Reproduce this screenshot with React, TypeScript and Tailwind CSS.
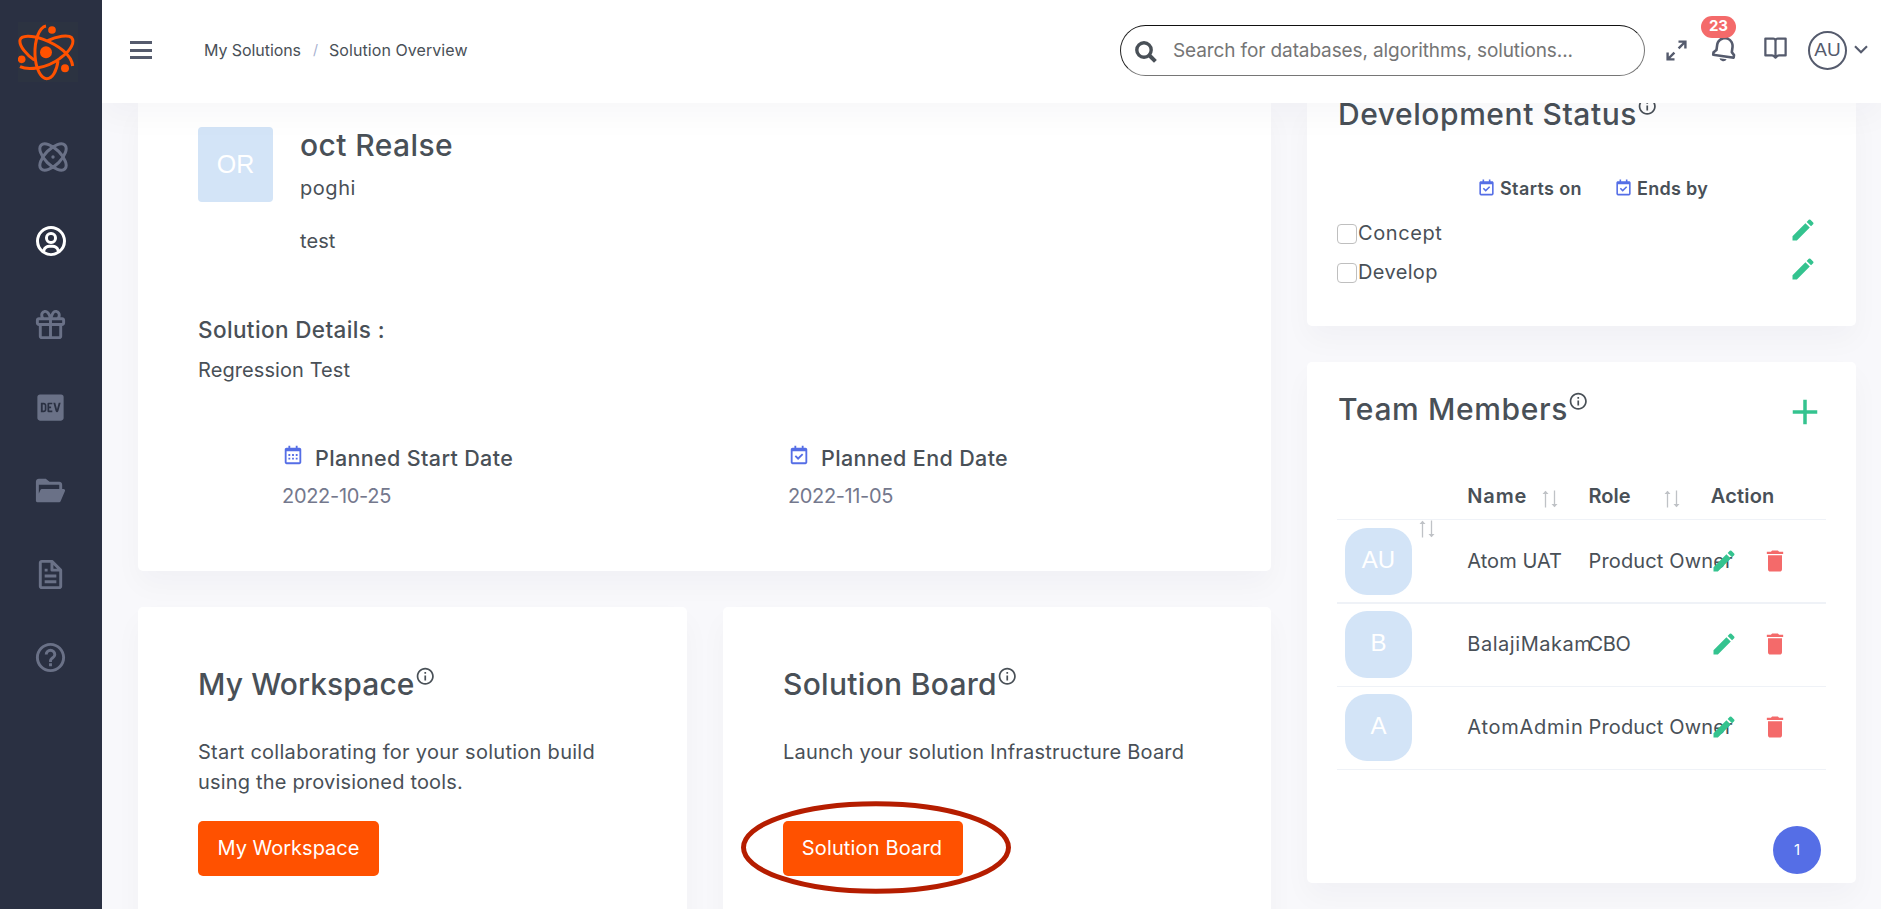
import type { ReactNode } from "react";
import { BiUserCircle, BiGift, BiLogoDevTo, BiSolidFolderOpen, BiFile, BiHelpCircle, BiBell, BiBookOpen, BiCalendar, BiCalendarCheck } from "react-icons/bi";
import { MdEdit, MdDelete, MdInfoOutline, MdAdd } from "react-icons/md";

function Logo() {
  return (
    <svg viewBox="54 66 180 180" className="size-[60px] bg-[#2c3341]" fill="none" stroke="#ff5100" strokeWidth="9">
      <path d="M138 78C118 82 103 120 105 165C107 210 125 236 140 236C158 236 170 212 174 183" />
      <path d="M103 180C80 165 57 138 60 120C63 105 95 105 130 118C175 135 215 165 218 198" />
      <path d="M60 200C85 212 140 205 180 175C215 150 225 125 215 113C205 103 170 108 143 122" />
      <g fill="#ff5100" stroke="none">
        <circle cx="138" cy="157" r="18" />
        <circle cx="156" cy="90" r="11.5" />
        <circle cx="65" cy="178" r="11.5" />
        <circle cx="195" cy="205" r="12" />
      </g>
    </svg>
  );
}

function AtomIcon() {
  return (
    <svg viewBox="0 0 30 30" className="-mt-px ml-1 size-[30px]" fill="none" stroke="currentColor" strokeWidth="3">
      <ellipse cx="15" cy="15" rx="16.8" ry="8" transform="rotate(45 15 15)" />
      <ellipse cx="15" cy="15" rx="16.8" ry="8" transform="rotate(-45 15 15)" />
      <circle cx="15" cy="15" r="1.7" fill="currentColor" stroke="none" />
    </svg>
  );
}

function ExpandIcon() {
  return (
    <svg viewBox="0 0 21 21" className="size-[21px]" fill="none" stroke="currentColor" strokeWidth="2.4">
      <path d="M12.5 1.6H19.4V8.5M19 2L12.6 8.4M1.6 12.5V19.4H8.5M2 19L8.4 12.6" />
    </svg>
  );
}

function SearchIcon() {
  return (
    <svg viewBox="0 0 22 22" className="mt-0.5 size-[22px]" fill="none" stroke="#495057">
      <circle cx="9" cy="9" r="7.2" strokeWidth="3.4" />
      <path d="M14 14L20.4 20.4" strokeWidth="4" />
    </svg>
  );
}

function ChevronIcon() {
  return (
    <svg viewBox="0 0 14 9" className="mr-[13px] mb-px ml-[7px] h-[9px] w-[14px]" fill="none" stroke="currentColor" strokeWidth="2.1">
      <path d="M1 1.3L7 7.3L13 1.3" />
    </svg>
  );
}

function SortArrows({ c = "" }: { c?: string }) {
  return (
    <svg viewBox="0 0 18 18" className={"h-[18px] w-[18px] " + c} fill="none" stroke="#bfc2c6" strokeWidth="1.3">
      <path d="M4.5 17.5V1.5M13.5 0.5V16.5" />
      <path d="M1.5 4L4.5 0.8L7.5 4ZM10.5 14L13.5 17.2L16.5 14Z" fill="#bfc2c6" stroke="none" />
    </svg>
  );
}

function Heading({ title, tracking }: { title: string; tracking: string }) {
  return (
    <h4 className={"flex h-9 text-[30px] leading-9 font-medium whitespace-nowrap " + tracking}>
      {title}
      <MdInfoOutline className="size-[20.5px] shrink-0" />
    </h4>
  );
}

function Stage({ label, tracking }: { label: string; tracking: string }) {
  return (
    <div className="flex h-[30px] items-center text-[20px]">
      <span className="mt-0.5 size-5 rounded-[4px] border border-[#bfbfbf] bg-white" />
      <span className={"ml-px " + tracking}>{label}</span>
      <MdEdit className="mr-[9px] -mt-[7px] ml-auto size-[28px] text-[#34c38f]" />
    </div>
  );
}

const card = "bg-white shadow-[0_14px_29px_rgba(18,38,63,0.03)]";

const navIcons: ReactNode[] = [
  <AtomIcon />,
  <BiUserCircle className="size-9 text-white" />,
  <BiGift />,
  <BiLogoDevTo />,
  <BiSolidFolderOpen />,
  <BiFile />,
  <BiHelpCircle />,
];

const members = [
  { initials: "AU", name: "Atom UAT", nameCls: "tracking-[0.05px]", role: "Product Owner", roleCls: "tracking-[0.15px]", row: "h-[84px] border-b-2 pt-2" },
  { initials: "B", name: "BalajiMakam", nameCls: "tracking-[0.55px]", role: "CBO", roleCls: "tracking-[-0.3px]", row: "h-[83px] border-b pt-[7px]" },
  { initials: "A", name: "AtomAdmin", nameCls: "tracking-[0.75px]", role: "Product Owner", roleCls: "tracking-[0.15px]", row: "h-[83px] border-b pt-[7px]" },
];

const dates = [
  { label: "Planned Start Date", Icon: BiCalendar, value: "2022-10-25", valueCls: "tracking-[-0.3px]" },
  { label: "Planned End Date", Icon: BiCalendarCheck, value: "2022-11-05", valueCls: "tracking-[-0.37px]" },
];

export default function App() {
  return (
    <div className="flex h-[909px] w-[1881px] overflow-hidden bg-[#f8f8fb] font-['Inter',sans-serif] text-[#495057]">
      <aside className="z-20 flex w-[102px] shrink-0 flex-col bg-[#2a3042] text-[35px] text-[#6a7187]">
        <div className="mt-[22px] ml-[18px]"><Logo /></div>
        <nav className="mt-[34px] flex flex-col items-center pr-px">
          {navIcons.map((icon, i) => (
            <a key={i} className="flex h-[83.3px] items-center">{icon}</a>
          ))}
        </nav>
      </aside>

      <div className="flex min-w-0 flex-1 flex-col">
        <header className="z-10 flex h-[103px] shrink-0 items-center bg-white pb-[3px] text-[#555b6d] shadow-[0_14px_29px_rgba(18,38,63,0.03)]">
          <div className="ml-7 flex h-[18px] w-[22px] flex-col justify-between">
            <span className="h-[3px] bg-[#555b6d]" />
            <span className="h-[3px] bg-[#555b6d]" />
            <span className="h-[3px] bg-[#555b6d]" />
          </div>
          <nav className="ml-[52px] flex text-[16px] leading-6 text-[#495057]">
            <span className="tracking-[-0.07px]">My Solutions</span>
            <span className="mr-[11px] ml-3 text-[14px] text-[#a6b0cf]">/</span>
            <span className="tracking-[0.07px]">Solution Overview</span>
          </nav>
          <div className="mt-px ml-auto flex h-[51px] w-[525px] items-center rounded-[26px] border border-t-[#111] border-r-[#767676] border-b-[#767676] border-l-[#222] pl-3.5 text-[19px] text-[#757575]">
            <SearchIcon />
            <span className="mt-px ml-4 tracking-[-0.11px]">Search for databases, algorithms, solutions...</span>
          </div>
          <div className="ml-[21px]"><ExpandIcon /></div>
          <div className="relative ml-[22px]">
            <BiBell className="-mt-1 size-[31px] rotate-[8deg]" />
            <span className="absolute -top-[21px] -left-2 flex h-[22px] w-[35px] items-center justify-center rounded-full bg-[#f46a6a] text-[15px] font-bold text-white">23</span>
          </div>
          <BiBookOpen className="-mt-[6px] ml-[22px] size-[27px]" />
          <span className="ml-[19px] flex size-[39px] items-center justify-center rounded-full border-2 border-[#555b6d] font-['Liberation_Sans',sans-serif] text-[19px]">AU</span>
          <ChevronIcon />
        </header>

        <main className="grid grid-cols-[1133px_549px] gap-9 pl-9">
          <div className="flex flex-col gap-9">
            <section className={"h-[468px] rounded-b-[5px] px-[60px] pt-6 " + card}>
              <div className="flex gap-[27px]">
                <span className="flex size-[75px] items-center justify-center rounded-[4px] bg-[#d3e4f7] font-['Liberation_Sans',sans-serif] text-[25px] text-white">OR</span>
                <div className="text-[20px] leading-[30px]">
                  <h4 className="text-[30px] leading-9 font-medium tracking-[0.4px]">oct Realse</h4>
                  <p className="mt-2.5 tracking-[0.56px]">poghi</p>
                  <p className="mt-[23px] tracking-[0.1px]">test</p>
                </div>
              </div>
              <h5 className="mt-[59px] text-[22.5px] leading-[30px] font-medium tracking-[0.38px]">Solution Details :</h5>
              <p className="mt-2.5 text-[20px] leading-[30px] tracking-[0.08px]">Regression Test</p>
              <div className="mt-[58px] grid grid-cols-[506px_1fr] pl-[84px]">
                {dates.map(({ label, Icon, value, valueCls }) => (
                  <div key={label}>
                    <h5 className="flex h-[30px] text-[21.5px] leading-[30px] font-medium">
                      <Icon className="mt-px size-[22px] text-[#556ee6]" />
                      <span className="ml-[11px] tracking-[0.36px]">{label}</span>
                    </h5>
                    <p className={"mt-2 text-[20px] leading-[30px] text-[#74788d] " + valueCls}>{value}</p>
                  </div>
                ))}
              </div>
            </section>

            <div className="grid grid-cols-[549px_548px] gap-9">
              <section className={"h-[340px] rounded-[5px] pt-[59px] pl-[60px] " + card}>
                <Heading title="My Workspace" tracking="tracking-[0.1px]" />
                <p className="mt-[35px] h-[60px] text-[20px] leading-[30px]">
                  <span className="tracking-[0.28px]">Start collaborating for your solution build</span>
                  <br />
                  <span className="tracking-[0.18px]">using the provisioned tools.</span>
                </p>
                <button className="mt-6 flex h-[55px] w-[181px] items-center justify-center rounded-[5px] bg-[#ff5100] pb-px text-[20px] text-white">My Workspace</button>
              </section>
              <section className={"h-[340px] rounded-[5px] pt-[59px] pl-[60px] " + card}>
                <Heading title="Solution Board" tracking="tracking-[0.3px]" />
                <p className="mt-[35px] h-[60px] text-[20px] leading-[30px] tracking-[0.2px]">Launch your solution Infrastructure Board</p>
                <div className="relative mt-6 w-[180px]">
                  <button className="flex h-[55px] w-[180px] items-center justify-center rounded-[5px] bg-[#ff5100] pr-0.5 pb-px text-[20px] tracking-[0.16px] text-white">Solution Board</button>
                  <svg viewBox="0 0 270 93" className="absolute -top-[20px] -left-[42px] h-[93px] w-[270px]" fill="none" stroke="#b51d00" strokeWidth="5">
                    <ellipse cx="135" cy="46.5" rx="132.5" ry="43.8" />
                  </svg>
                </div>
              </section>
            </div>
          </div>

          <div className="flex flex-col gap-9">
            <section className={"h-[223px] rounded-b-[5px] px-[30px] " + card}>
              <div className="-mt-[7px] pl-px"><Heading title="Development Status" tracking="tracking-[0.56px]" /></div>
              <div className="mt-[43px] flex h-7 pl-[140px] text-[18px] leading-7 font-semibold">
                <BiCalendarCheck className="mt-[3px] mr-1 size-[19px] text-[#556ee6]" />
                <span className="tracking-[0.38px]">Starts on</span>
                <BiCalendarCheck className="mt-[3px] mr-1 ml-8 size-[19px] text-[#556ee6]" />
                <span className="tracking-[0.28px]">Ends by</span>
              </div>
              <div className="mt-[15px] flex flex-col gap-[9px]">
                <Stage label="Concept" tracking="tracking-[0.6px]" />
                <Stage label="Develop" tracking="tracking-[0.36px]" />
              </div>
            </section>

            <section className={"flex h-[521px] flex-col rounded-[5px] px-[30px] pt-[29px] " + card}>
              <div className="flex items-start justify-between pl-px">
                <Heading title="Team Members" tracking="tracking-[0.63px]" />
                <MdAdd className="size-[42px] text-[#34c38f]" />
              </div>
              <div className="mt-[42px] w-[489px] text-[20px] leading-[30px]">
                <div className="grid h-[45px] grid-cols-4 border-b border-[#eff2f7] pt-1.5 font-semibold">
                  <div className="flex pr-[23px]"><SortArrows c="mt-[39px] ml-auto" /></div>
                  <div className="flex justify-between pr-[23px] pl-2"><span className="tracking-[0.87px]">Name</span><SortArrows c="mt-[9px]" /></div>
                  <div className="flex justify-between pr-[23px] pl-[7px]"><span>Role</span><SortArrows c="mt-[9px]" /></div>
                  <div className="pl-[7px] tracking-[0.2px]">Action</div>
                </div>
                {members.map((m) => (
                  <div key={m.initials} className={"grid grid-cols-4 border-[#eff2f7] " + m.row}>
                    <span className="ml-2 flex size-[67px] items-center justify-center rounded-[22px] bg-[#d3e4f7] pb-[3px] font-['Liberation_Sans',sans-serif] text-[24px] text-white">{m.initials}</span>
                    <div className={"mt-[18px] pl-2 whitespace-nowrap " + m.nameCls}>{m.name}</div>
                    <div className={"mt-[18px] pl-[7px] whitespace-nowrap " + m.roleCls}>{m.role}</div>
                    <div className="z-10 mt-[19px] flex gap-[23px] pl-1.5">
                      <MdEdit className="size-[28px] text-[#34c38f]" />
                      <MdDelete className="size-[28px] text-[#f46a6a]" />
                    </div>
                  </div>
                ))}
              </div>
              <span className="mt-auto mr-[5px] mb-[9px] flex size-12 items-center justify-center self-end rounded-full bg-[#556ee6] text-[15px] text-white">1</span>
            </section>
          </div>
        </main>
      </div>
    </div>
  );
}
